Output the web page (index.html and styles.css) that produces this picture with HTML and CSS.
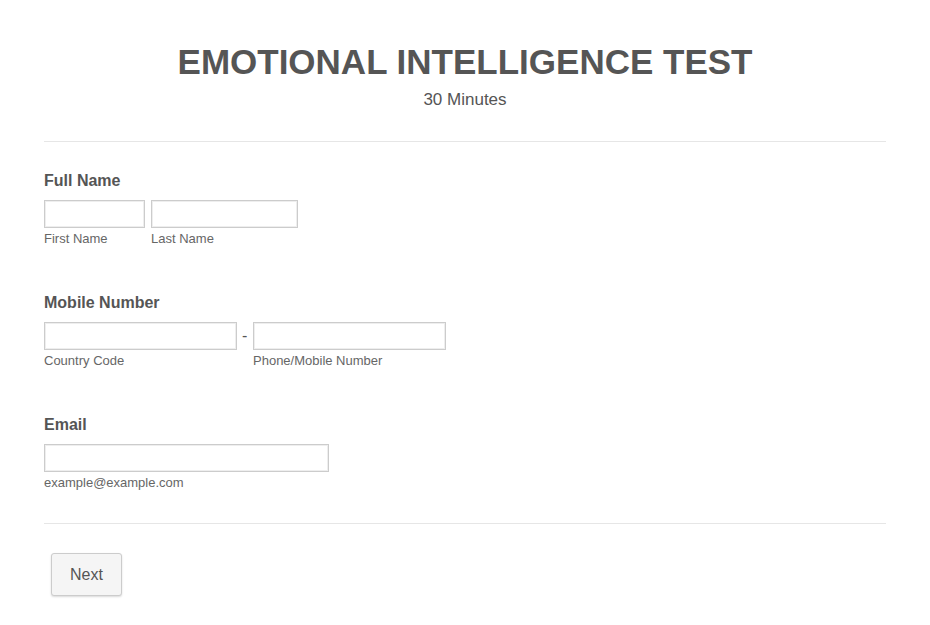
FILE: index.html
```html
<!DOCTYPE html>
<html lang="en">
<head>
  <meta charset="UTF-8">
  <meta name="viewport" content="width=device-width, initial-scale=1.0">
  <title>Emotional Intelligence Test</title>
  <link rel="stylesheet" href="styles.css">
</head>
<body>
  <form class="form">
    <div class="header">
      <h1>EMOTIONAL INTELLIGENCE TEST</h1>
      <p class="subheader">30 Minutes</p>
    </div>

    <div class="field">
      <label class="label">Full Name</label>
      <div class="row">
        <div class="sub">
          <input type="text" class="input first">
          <span class="sublabel">First Name</span>
        </div>
        <div class="sub">
          <input type="text" class="input last">
          <span class="sublabel">Last Name</span>
        </div>
      </div>
    </div>

    <div class="field">
      <label class="label">Mobile Number</label>
      <div class="row phone-row">
        <div class="sub">
          <input type="text" class="input phone">
          <span class="sublabel">Country Code</span>
        </div>
        <span class="dash">-</span>
        <div class="sub">
          <input type="text" class="input phone">
          <span class="sublabel">Phone/Mobile Number</span>
        </div>
      </div>
    </div>

    <div class="field">
      <label class="label">Email</label>
      <div class="sub">
        <input type="email" class="input email">
        <span class="sublabel">example@example.com</span>
      </div>
    </div>

    <div class="footer">
      <button type="button" class="next">Next</button>
    </div>
  </form>
</body>
</html>
```

FILE: styles.css
```css
body {
  font-family: 'Liberation Sans', Arial, sans-serif;
  color: #555;
  background: #fff;
  margin: 0;
  padding: 0;
}
.form {
  margin: 0 44px;
  padding-top: 41px;
}
.header {
  text-align: center;
  padding-bottom: 31px;
  border-bottom: 1px solid #e6e6e6;
}
h1 {
  margin: 0;
  font-size: 35px;
  line-height: 42px;
  font-weight: bold;
  color: #555;
}
.subheader {
  margin: 7px 0 0;
  font-size: 17px;
  line-height: 20px;
}
.field {
  padding-top: 29px;
  padding-bottom: 16px;
}
.label {
  display: block;
  font-size: 16px;
  font-weight: bold;
  line-height: 20px;
  margin-bottom: 9px;
}
.row {
  display: flex;
  align-items: flex-start;
  gap: 6px;
}
.phone-row {
  gap: 5px;
}
.sub {
  display: flex;
  flex-direction: column;
}
.input {
  box-sizing: border-box;
  height: 28px;
  border: 1px solid #ccc;
  box-shadow: inset 0 0 0 1px #eee;
  padding: 4px;
  margin: 0;
  font-family: inherit;
  font-size: 14px;
}
.first { width: 101px; }
.last { width: 147px; }
.phone { width: 193px; }
.email { width: 285px; }
.sublabel {
  font-size: 13px;
  line-height: 16px;
  margin-top: 3px;
  color: #666;
}
.dash {
  font-size: 16px;
  line-height: 28px;
  width: 6px;
}
.field + .field {
  padding-top: 30px;
}
.footer {
  margin-top: 16px;
  border-top: 1px solid #e6e6e6;
  padding: 29px 0 30px 7px;
}
.next {
  width: 71px;
  height: 43px;
  background: #f5f5f5;
  border: 1px solid #ccc;
  border-radius: 3px;
  box-shadow: 0 1px 2px rgba(0, 0, 0, 0.15);
  font-family: inherit;
  font-size: 16px;
  color: #555;
  cursor: pointer;
}
```
